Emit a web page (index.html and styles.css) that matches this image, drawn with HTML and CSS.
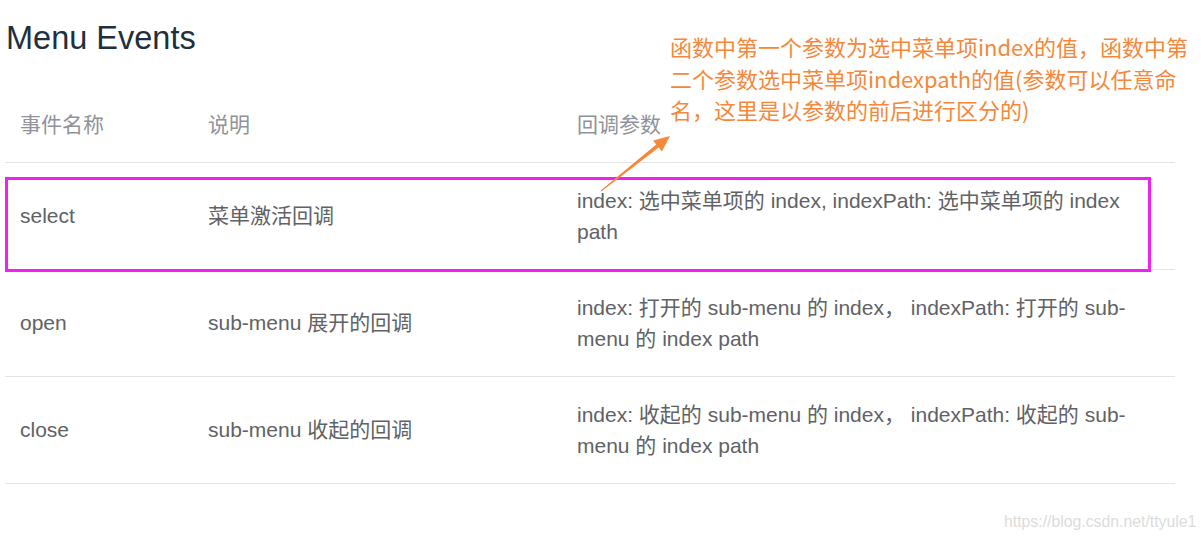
FILE: index.html
```html
<!DOCTYPE html>
<html lang="zh-CN">
<head>
<meta charset="utf-8">
<title>Menu Events</title>
<link rel="stylesheet" href="styles.css">
</head>
<body>
<div class="page">
  <h3 class="title">Menu Events</h3>
  <table class="events">
    <thead>
      <tr>
        <th class="c1">事件名称</th>
        <th class="c2">说明</th>
        <th class="c3">回调参数</th>
      </tr>
    </thead>
    <tbody>
      <tr>
        <td>select</td>
        <td>菜单激活回调</td>
        <td>index: 选中菜单项的 index, indexPath: 选中菜单项的 index path</td>
      </tr>
      <tr>
        <td>open</td>
        <td>sub-menu 展开的回调</td>
        <td>index: 打开的 sub-menu 的 index， indexPath: 打开的 sub-menu 的 index path</td>
      </tr>
      <tr>
        <td>close</td>
        <td>sub-menu 收起的回调</td>
        <td>index: 收起的 sub-menu 的 index， indexPath: 收起的 sub-menu 的 index path</td>
      </tr>
    </tbody>
  </table>

  <div class="highlight"></div>
  <svg class="arrow" width="80" height="66" viewBox="0 0 80 66">
    <polygon points="6.3,61.4 63.75,17.56 66.9,21.5 75,6 58.1,10.5 61.25,14.44 5.7,60.6" fill="#f5883a"/>
  </svg>
  <div class="note">函数中第一个参数为选中菜单项index的值，函数中第<br>二个参数选中菜单项indexpath的值(参数可以任意命<br>名，这里是以参数的前后进行区分的)</div>
  <div class="watermark">https://blog.csdn.net/ttyule1</div>
</div>
</body>
</html>
```
FILE: styles.css
```css
html, body {
  margin: 0;
  padding: 0;
  background: #ffffff;
}
.page {
  position: relative;
  width: 1203px;
  height: 543px;
  padding-left: 5px;
  box-sizing: border-box;
  font-family: "Liberation Sans", "Noto Sans CJK SC", sans-serif;
  overflow: hidden;
}
.title {
  margin: 0;
  padding-top: 14px;
  padding-left: 1px;
  font-size: 32.5px;
  line-height: 49.5px;
  font-weight: normal;
  color: #1f2f3d;
}
.events {
  margin-top: 24px;
  width: 1170px;
  border-collapse: collapse;
  table-layout: fixed;
  font-size: 21px;
  line-height: 31.5px;
}
.events th, .events td {
  padding: 21.5px 15px;
  text-align: left;
  vertical-align: middle;
  border-bottom: 1px solid #e2e4ea;
}
.events th {
  font-weight: normal;
  color: #909399;
}
.events td {
  color: #606266;
}
.c1 { width: 158px; }
.c2 { width: 339px; }
.highlight {
  position: absolute;
  left: 5px;
  top: 177px;
  width: 1146px;
  height: 95px;
  box-sizing: border-box;
  border: 3px solid #f11ff0;
}
.arrow {
  position: absolute;
  left: 595px;
  top: 130px;
}
.note {
  position: absolute;
  left: 670px;
  top: 31px;
  white-space: nowrap;
  font-family: "Noto Sans CJK SC", sans-serif;
  font-size: 22px;
  line-height: 31.5px;
  color: #f5883a;
}
.watermark {
  position: absolute;
  left: 1004px;
  top: 513px;
  font-family: "Liberation Sans", sans-serif;
  font-size: 15.8px;
  color: #dcdcdc;
}
```
